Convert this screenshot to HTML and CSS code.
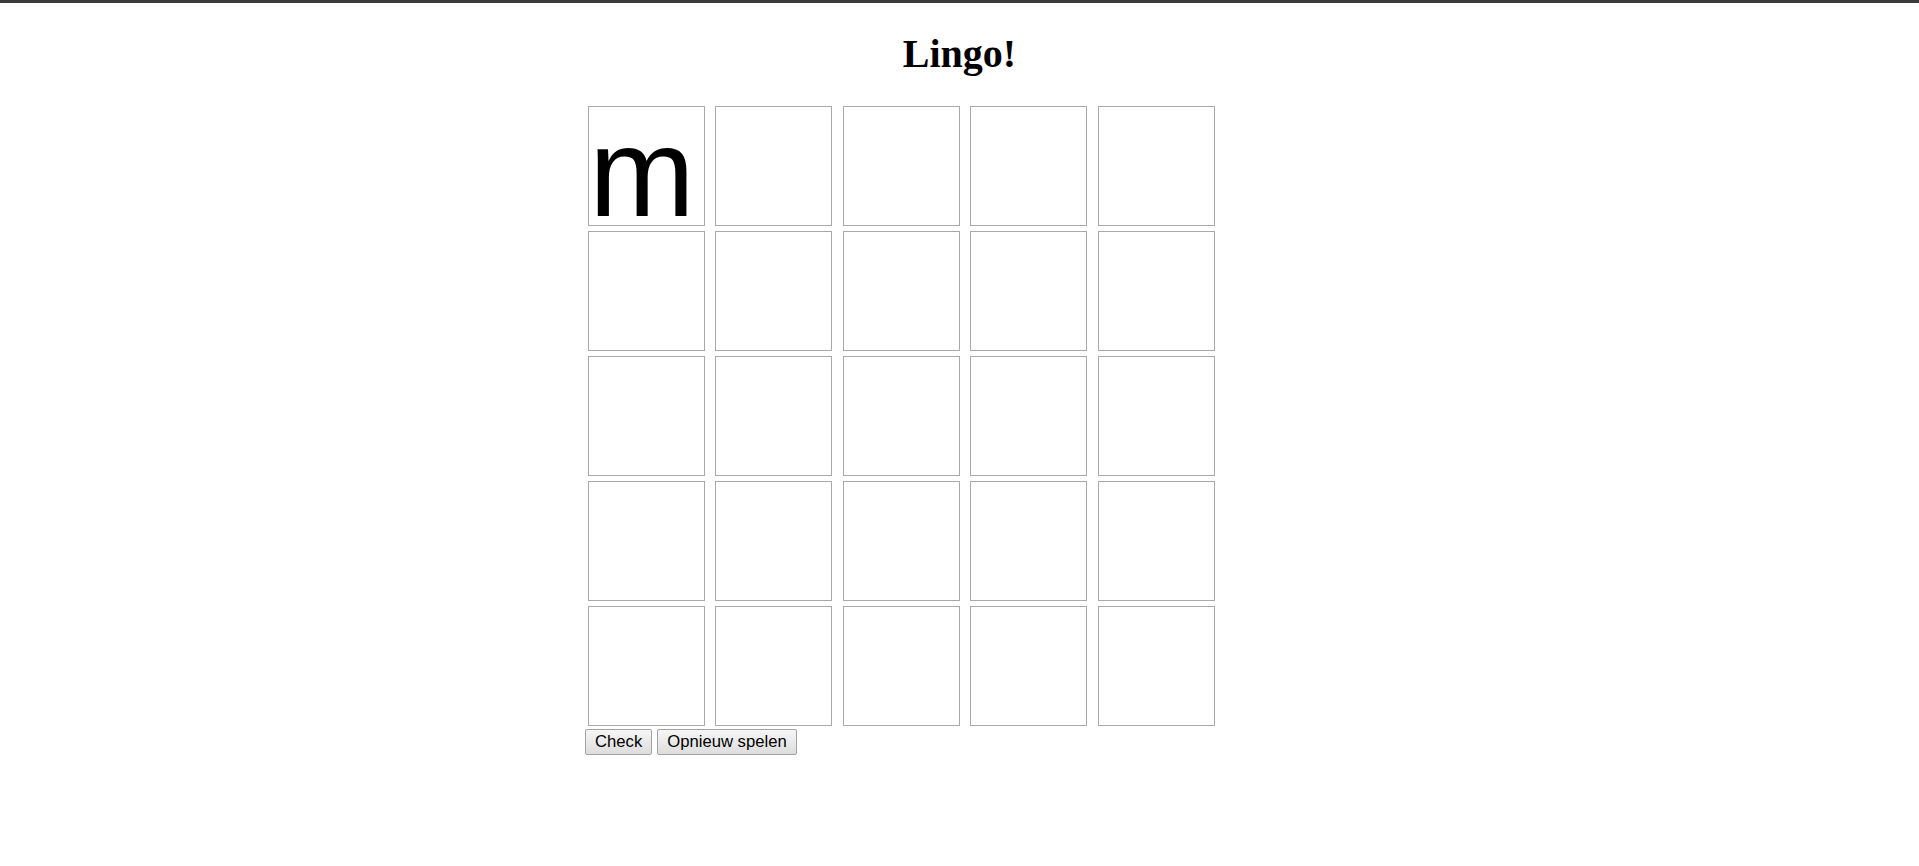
FILE: index.html
```html
<!DOCTYPE html>
<html lang="nl">
<head>
<meta charset="utf-8">
<title>Lingo!</title>
<link rel="stylesheet" href="styles.css">
</head>
<body>
<div class="topbar"></div>
<h1 class="title">Lingo!</h1>
<div class="game">
  <div class="board">
    <div class="cell">m</div><div class="cell"></div><div class="cell"></div><div class="cell"></div><div class="cell"></div>
    <div class="cell"></div><div class="cell"></div><div class="cell"></div><div class="cell"></div><div class="cell"></div>
    <div class="cell"></div><div class="cell"></div><div class="cell"></div><div class="cell"></div><div class="cell"></div>
    <div class="cell"></div><div class="cell"></div><div class="cell"></div><div class="cell"></div><div class="cell"></div>
    <div class="cell"></div><div class="cell"></div><div class="cell"></div><div class="cell"></div><div class="cell"></div>
  </div>
  <div class="actions">
    <button class="btn" type="button">Check</button>
    <button class="btn" type="button">Opnieuw spelen</button>
  </div>
</div>
</body>
</html>
```
FILE: styles.css
```css
html, body {
  margin: 0;
  padding: 0;
  background: #ffffff;
}
body {
  font-family: "Liberation Serif", "Times New Roman", serif;
  color: #000;
}
.topbar {
  height: 3px;
  background: #3b3b3b;
}
.title {
  margin: 29px 0 30px;
  font-family: "Liberation Serif", "Times New Roman", serif;
  font-weight: bold;
  font-size: 40px;
  line-height: 44px;
  text-align: center;
}
.game {
  width: 749px;
  margin: 0 auto;
}
.board {
  display: grid;
  grid-template-columns: repeat(5, 117px);
  grid-auto-rows: 120px;
  column-gap: 10.4px;
  row-gap: 5px;
  padding-left: 3px;
}
.cell {
  box-sizing: border-box;
  height: 120px;
  padding-top: 12px;
  border: 1px solid #a9a9a9;
  background: #fff;
  font-family: "Liberation Sans", Arial, sans-serif;
  font-size: 127px;
  line-height: 106px;
  color: #000;
  white-space: nowrap;
}
.actions {
  display: flex;
  gap: 5px;
  margin-top: 3px;
}
.btn {
  box-sizing: border-box;
  height: 26px;
  margin: 0;
  padding: 0 9px;
  font-family: "Liberation Sans", Arial, sans-serif;
  font-size: 16.67px;
  line-height: 24px;
  color: #000;
  background: linear-gradient(#f6f6f6, #dddddd);
  border: 1px solid #a3a3a3;
  border-radius: 2px;
}
```
